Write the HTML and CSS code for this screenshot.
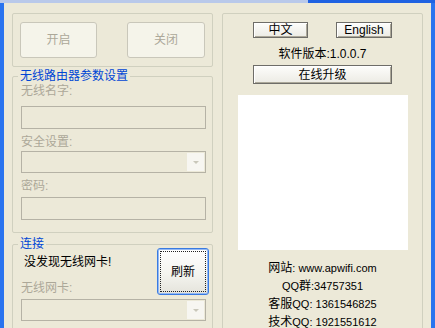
FILE: index.html
```html
<!DOCTYPE html>
<html lang="zh-CN">
<head>
    <meta charset="UTF-8">
    <title>无线路由器</title>
    <link rel="stylesheet" href="styles.css">
</head>
<body>

<div class="frame-top"></div>
<div class="window">
    <div class="client">
        <div class="col-left">
            <div class="group power">
                <button class="btn-dis btn-big" disabled>开启</button>
                <button class="btn-dis btn-big wide" disabled>关闭</button>
            </div>

            <div class="group params">
                <div class="caption">无线路由器参数设置</div>
                <div class="lbl first">无线名字:</div>
                <div class="field edit gap-8"></div>
                <div class="lbl">安全设置:</div>
                <div class="field combo gap-2"><span class="arrow"></span></div>
                <div class="lbl">密码:</div>
                <div class="field edit gap-4"></div>
            </div>

            <div class="group conn">
                <div class="caption">连接</div>
                <div class="conn-top">
                    <div>
                        <div class="conn-msg">没发现无线网卡!</div>
                        <div class="lbl conn-lbl">无线网卡:</div>
                    </div>
                    <button class="btn-refresh">刷新</button>
                </div>
                <div class="field combo gap-4"><span class="arrow"></span></div>
            </div>
        </div>

        <div class="group info-group">
            <div class="lang-row">
                <button class="btn lang">中文</button>
                <button class="btn lang en">English</button>
            </div>
            <div class="ver">软件版本:1.0.0.7</div>
            <button class="btn upgrade">在线升级</button>
            <div class="qr"></div>
            <div class="info">
                <div><span class="cn">网站</span>: www.apwifi.com</div>
                <div>QQ<span class="cn">群</span>:34757351</div>
                <div><span class="cn">客服</span>QQ: 1361546825</div>
                <div><span class="cn">技术</span>QQ: 1921551612</div>
            </div>
        </div>
    </div>
</div>

</body>
</html>
```

FILE: styles.css
```css
* { box-sizing: border-box; }
body { margin: 0; background: #ece9d8; color: #000; font-family: "Liberation Sans", "Noto Sans CJK SC", sans-serif; font-size: 12px; line-height: 14px; }
button { font-family: inherit; font-size: 12px; line-height: 14px; padding: 0; cursor: default; }

.frame-top { height: 3px; background: linear-gradient(to right, #b9c9ea 0, #b9c9ea 308px, #1f62e2 308px); }
.window { height: 325px; overflow: hidden; border-left: 4px solid #2a74ef; border-right: 4px solid #2a74ef; background: #ece9d8; }
.client { display: flex; gap: 9px; padding: 10px 0 0 8px; }
.col-left { width: 201px; }

.group { border: 1px solid #d0d0bf; border-radius: 2px; }
.caption { width: fit-content; margin: -8px 0 0 -3px; padding: 0 2px; background: #ece9d8; color: #0046d5; }

.power { display: flex; justify-content: space-between; padding: 8px 7px; }
.btn-dis { background: #f5f4ea; border: 1px solid #c9c7ba; border-radius: 3px; color: #aca899; }
.btn-big { width: 77px; height: 36px; }
.btn-big.wide { width: 78px; }

.params { margin-top: 9px; padding: 0 6px 12px 8px; }
.lbl { color: #aca899; margin-top: 6px; }
.lbl.first { margin-top: 1px; }
.field { border: 1px solid #b5b2a5; background: #ece9d8; }
.edit { height: 23px; }
.combo { height: 22px; display: flex; justify-content: flex-end; padding: 1px; }
.combo .arrow { width: 17px; background: #f7f6f1; display: flex; align-items: center; justify-content: center; }
.combo .arrow::before { content: ''; border-left: 3px solid transparent; border-right: 3px solid transparent; border-top: 3px solid #c9c7ba; }
.gap-2 { margin-top: 2px; }
.gap-4 { margin-top: 4px; }
.gap-8 { margin-top: 8px; }

.conn { margin-top: 11px; padding: 0 6px 20px 8px; }
.conn-top { display: flex; justify-content: space-between; }
.conn-msg { margin: 4px 0 0 3px; }
.conn-lbl { margin-top: 12px; }
.btn-refresh { width: 52px; height: 47px; margin: -3px -3px 0 0; border: 1px solid #3a7be0; border-radius: 3px; box-shadow: inset 0 0 0 1px #93b9f5; background: linear-gradient(#ffffff, #f4f4ef 55%, #e4e3db); outline: 1px dotted #222; outline-offset: -4px; color: #000; }

.info-group { width: 201px; height: 340px; padding-top: 8px; display: flex; flex-direction: column; align-items: center; }
.lang-row { display: flex; gap: 28px; }
.btn { border: 1px solid #6e6d68; background: linear-gradient(#fdfdfb, #ecebe4); box-shadow: inset 1px 1px 0 #fff, inset -1px -1px 0 #aca899; color: #000; }
.lang { width: 55px; height: 16px; }
.lang.en { width: 56px; }
.ver { margin-top: 9px; }
.upgrade { width: 139px; height: 19px; margin-top: 4px; }
.qr { width: 170px; height: 155px; margin-top: 11px; background: #fff; }
.info { margin-top: 9px; font-size: 11px; line-height: 18px; text-align: center; }
.info .cn { font-size: 12px; }
```
